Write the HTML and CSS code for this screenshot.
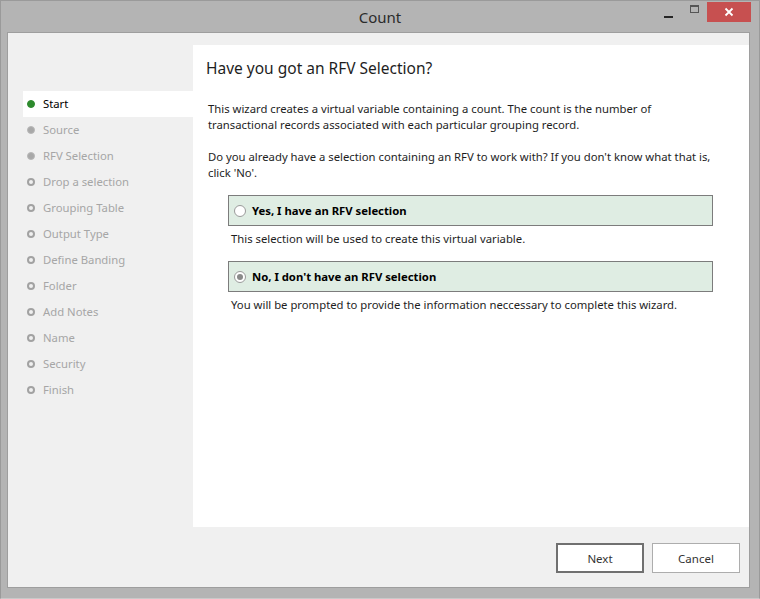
FILE: index.html
```html
<!DOCTYPE html>
<html>
<head>
<meta charset="utf-8">
<link rel="stylesheet" href="styles.css">
</head>
<body>
<div class="window">
  <div class="titlebar">
    <div></div>
    <div class="title">Count</div>
    <div class="controls">
      <span class="ctl min"><span class="min-bar"></span></span>
      <span class="ctl max"><span class="max-box"></span></span>
      <span class="ctl close">
        <svg width="10" height="10" viewBox="0 0 10 10"><path d="M1.5 1.5 L8.5 8.5 M8.5 1.5 L1.5 8.5" stroke="#fff" stroke-width="1.8" fill="none"/></svg>
      </span>
    </div>
  </div>
  <div class="client">
    <div class="body-row">
      <ul class="steps">
        <li class="step active"><span class="dot green"></span>Start</li>
        <li class="step"><span class="dot filled"></span>Source</li>
        <li class="step"><span class="dot filled"></span>RFV Selection</li>
        <li class="step"><span class="dot"></span>Drop a selection</li>
        <li class="step"><span class="dot"></span>Grouping Table</li>
        <li class="step"><span class="dot"></span>Output Type</li>
        <li class="step"><span class="dot"></span>Define Banding</li>
        <li class="step"><span class="dot"></span>Folder</li>
        <li class="step"><span class="dot"></span>Add Notes</li>
        <li class="step"><span class="dot"></span>Name</li>
        <li class="step"><span class="dot"></span>Security</li>
        <li class="step"><span class="dot"></span>Finish</li>
      </ul>
      <div class="main">
        <h1 class="heading">Have you got an RFV Selection?</h1>
        <p class="para">This wizard creates a virtual variable containing a count. The count is the number of<br>transactional records associated with each particular grouping record.</p>
        <p class="para">Do you already have a selection containing an RFV to work with? If you don't know what that is,<br>click 'No'.</p>
        <div class="options">
          <label class="option"><span class="radio"></span>Yes, I have an RFV selection</label>
          <div class="desc">This selection will be used to create this virtual variable.</div>
          <label class="option"><span class="radio checked"></span>No, I don't have an RFV selection</label>
          <div class="desc">You will be prompted to provide the information neccessary to complete this wizard.</div>
        </div>
      </div>
    </div>
    <div class="footer">
      <button class="btn primary">Next</button>
      <button class="btn">Cancel</button>
    </div>
  </div>
</div>
</body>
</html>
```
FILE: styles.css
```css
html, body {
  margin: 0;
  padding: 0;
}
body {
  width: 760px;
  height: 599px;
  overflow: hidden;
  font-family: "Noto Sans", "Open Sans", sans-serif;
  font-size: 11.3px;
  color: #1e1e1e;
}
.window {
  box-sizing: border-box;
  width: 760px;
  height: 599px;
  background: #b4b4b4;
  border: 1px solid #9a9a9a;
  border-bottom-color: #c9c9c9;
  display: flex;
  flex-direction: column;
}
.titlebar {
  height: 31px;
  display: grid;
  grid-template-columns: 1fr auto 1fr;
  align-items: start;
}
.title {
  font-family: "Noto Sans", "Open Sans", sans-serif;
  font-size: 15px;
  color: #2b2b2b;
  padding-top: 6px;
  line-height: 20px;
}
.controls {
  display: flex;
  justify-content: flex-end;
  align-items: flex-start;
  padding-right: 8px;
  padding-top: 1px;
}
.ctl {
  display: flex;
  align-items: center;
  justify-content: center;
  height: 20px;
}
.min {
  width: 26px;
}
.min-bar {
  width: 9px;
  height: 2px;
  background: #262626;
  margin-top: 9px;
}
.max {
  width: 26px;
}
.max-box {
  box-sizing: border-box;
  width: 9px;
  height: 8px;
  border: 1px solid #555;
  border-top-width: 2px;
  margin-bottom: 6px;
}
.close {
  width: 44px;
  background: #c75050;
}
.client {
  flex: 1;
  margin: 0 9px 10px 6px;
  border: 1px solid #9e9e9e;
  background: #f0f0f0;
  display: flex;
  flex-direction: column;
}
.body-row {
  flex: 1;
  display: flex;
  padding-top: 12px;
}
.steps {
  list-style: none;
  margin: 0;
  padding: 46px 0 0 15px;
  width: 170px;
}
.step {
  height: 26px;
  display: flex;
  align-items: center;
  color: #a6a6a6;
  line-height: 16px;
}
.step.active {
  background: #fff;
  color: #000;
}
.dot {
  box-sizing: border-box;
  width: 8px;
  height: 8px;
  border-radius: 50%;
  border: 2px solid #a2a2a2;
  background: #f0f0f0;
  margin: 0 8px 0 4px;
  flex: none;
}
.dot.filled {
  background: #a8a8a8;
  border: 1px solid #b8b8b8;
}
.dot.green {
  background: #2d8a2d;
  border: 1px solid #2d8a2d;
}
.main {
  flex: 1;
  background: #fff;
  padding: 12px 0 0 15px;
}
.heading {
  margin: 0 0 22px -2px;
  font-size: 15.5px;
  font-weight: normal;
  line-height: 22px;
  color: #1e1e1e;
}
.para {
  margin: 0 0 16px;
  line-height: 16px;
}
.options {
  margin-left: 20px;
  margin-top: -2px;
  width: 485px;
}
.option {
  box-sizing: border-box;
  height: 31px;
  display: flex;
  align-items: center;
  background: #dfede3;
  border: 1px solid #7c7c7c;
  padding-left: 5px;
  font-weight: bold;
  color: #000;
}
.radio {
  box-sizing: border-box;
  width: 12px;
  height: 12px;
  border-radius: 50%;
  border: 1px solid #9a9a9a;
  background: #fff;
  margin-right: 6px;
  display: flex;
  align-items: center;
  justify-content: center;
}
.radio.checked::after {
  content: "";
  width: 6px;
  height: 6px;
  border-radius: 50%;
  background: #8a8a8a;
}
.desc {
  line-height: 16px;
  margin: 5px 0 14px 3px;
}
.footer {
  height: 60px;
  display: flex;
  justify-content: flex-end;
  align-items: flex-start;
  gap: 8px;
  padding: 16px 9px 0 0;
  box-sizing: border-box;
}
.btn {
  box-sizing: border-box;
  width: 88px;
  height: 30px;
  background: #fff;
  border: 1px solid #adadad;
  font-family: "Noto Sans", "Open Sans", sans-serif;
  font-size: 11.5px;
  color: #333;
  padding: 0;
}
.btn.primary {
  border: 2px solid #707070;
}
```
